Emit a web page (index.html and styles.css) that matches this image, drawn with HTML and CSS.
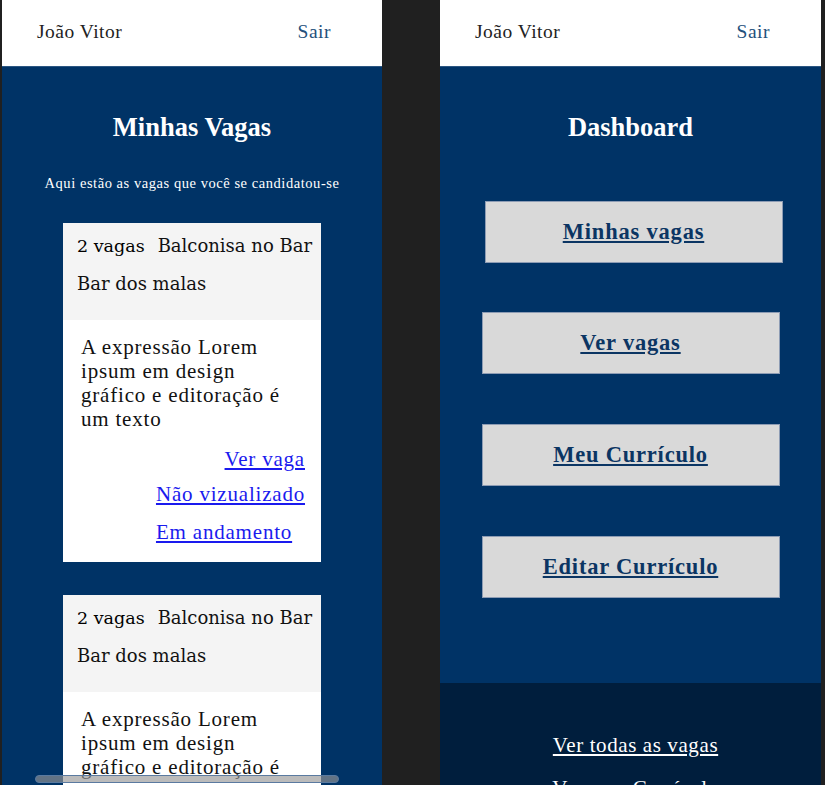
FILE: index.html
```html
<!DOCTYPE html>
<html lang="pt-BR">
<head>
<meta charset="utf-8">
<title>Vagas</title>
<link rel="stylesheet" href="styles.css">
</head>
<body>
<div class="screen">
  <section class="panel panel-left">
    <header class="topbar">
      <span class="user">João Vitor</span>
      <a class="logout" href="#">Sair</a>
    </header>
    <main class="content">
      <h1 class="title">Minhas Vagas</h1>
      <p class="subtitle">Aqui estão as vagas que você se candidatou-se</p>
      <div class="cards">
        <article class="card">
          <div class="card-head">
            <div class="card-row">
              <span class="count">2 vagas</span>
              <span class="role">Balconisa no Bar</span>
            </div>
            <div class="company">Bar dos malas</div>
          </div>
          <div class="card-body">
            <p class="desc">A expressão Lorem ipsum em design gráfico e editoração é um texto</p>
            <div class="actions">
              <a class="view" href="#">Ver vaga</a>
              <div class="status">
                <a href="#">Não vizualizado</a>
                <a href="#">Em andamento</a>
              </div>
            </div>
          </div>
        </article>
        <article class="card">
          <div class="card-head">
            <div class="card-row">
              <span class="count">2 vagas</span>
              <span class="role">Balconisa no Bar</span>
            </div>
            <div class="company">Bar dos malas</div>
          </div>
          <div class="card-body">
            <p class="desc">A expressão Lorem ipsum em design gráfico e editoração é um texto</p>
            <div class="actions">
              <a class="view" href="#">Ver vaga</a>
              <div class="status">
                <a href="#">Não vizualizado</a>
                <a href="#">Em andamento</a>
              </div>
            </div>
          </div>
        </article>
      </div>
    </main>
    <div class="hscroll"></div>
  </section>

  <section class="panel panel-right">
    <header class="topbar">
      <span class="user">João Vitor</span>
      <a class="logout" href="#">Sair</a>
    </header>
    <main class="content dash">
      <h1 class="title">Dashboard</h1>
      <nav class="menu">
        <div class="btn btn-first"><a href="#">Minhas vagas</a></div>
        <div class="btn"><a href="#">Ver vagas</a></div>
        <div class="btn"><a href="#">Meu Currículo</a></div>
        <div class="btn"><a href="#">Editar Currículo</a></div>
      </nav>
    </main>
    <footer class="foot">
      <a href="#">Ver todas as vagas</a>
      <a href="#">Ver meu Currículo</a>
    </footer>
  </section>
</div>
</body>
</html>
```

FILE: styles.css
```css
* { box-sizing: border-box; }

html, body {
  margin: 0;
  padding: 0;
  background: #202020;
  height: 785px;
  overflow: hidden;
}

.screen {
  display: flex;
  height: 785px;
  padding-left: 2px;
  gap: 58px;
  font-family: "Liberation Serif", "Times New Roman", serif;
}

.panel {
  position: relative;
  width: 380px;
  height: 785px;
  overflow: hidden;
  background: #003366;
  display: flex;
  flex-direction: column;
}

.panel-right { width: 381px; }

.topbar {
  height: 67px;
  flex: none;
  background: #ffffff;
  border-bottom: 1px solid #2b5682;
  display: flex;
  justify-content: space-between;
  align-items: center;
  padding: 0 51px 2px 35px;
  font-size: 19.5px;
  letter-spacing: 0.5px;
}

.user { color: #222; }

.logout {
  color: #24507c;
  text-decoration: none;
}

.content {
  display: flex;
  flex-direction: column;
  align-items: center;
}

.title {
  margin: 45px 0 0;
  color: #fff;
  font-size: 26.5px;
  font-weight: bold;
  line-height: 30px;
}

.subtitle {
  margin: 33px 0 0;
  color: #fff;
  font-size: 14.5px;
  letter-spacing: 0.55px;
  line-height: 16px;
}

.cards {
  margin-top: 32px;
  display: flex;
  flex-direction: column;
  gap: 33px;
}

.card {
  width: 258px;
  background: #fff;
  flex: none;
}

.card-head {
  background: #f4f4f4;
  height: 97px;
  padding: 12px 0 0 14px;
  font-family: "DejaVu Serif", serif;
  color: #111;
  white-space: nowrap;
}

.card-row {
  display: flex;
  gap: 13px;
  align-items: baseline;
}

.count { font-size: 17.5px; color: #000; }
.role { font-size: 18px; }

.company {
  margin-top: 17px;
  font-size: 18px;
}

.card-body {
  padding: 15px 16px 18px 18px;
}

.desc {
  margin: 0;
  font-size: 21px;
  letter-spacing: 0.8px;
  line-height: 24px;
  color: #111;
}

.actions {
  margin-top: 16px;
  display: flex;
  flex-direction: column;
  font-size: 21px;
  letter-spacing: 0.8px;
  line-height: 24px;
}

.actions a { color: #1a1aee; }

.view { align-self: flex-end; }

.status {
  align-self: flex-end;
  display: flex;
  flex-direction: column;
  gap: 14px;
  margin-top: 11px;
}

.hscroll {
  position: absolute;
  left: 33px;
  bottom: 2px;
  width: 304px;
  height: 8px;
  border-radius: 5px;
  border: 1px solid #5a7aa0;
  background: rgba(150, 150, 150, 0.65);
}

.dash { flex: 1; }

.menu {
  margin-top: 59px;
  display: flex;
  flex-direction: column;
  align-items: center;
  gap: 50px;
}

.btn {
  width: 298px;
  height: 62px;
  background: #d9d9d9;
  border: 1px solid #8d9cb4;
  display: flex;
  align-items: center;
  justify-content: center;
}

.btn-first { margin-left: 6px; margin-bottom: -1px; }

.btn a {
  color: #0b3563;
  font-size: 22.5px;
  letter-spacing: 0.8px;
  font-weight: bold;
}

.foot {
  flex: none;
  height: 102px;
  background: #001e3d;
  display: flex;
  flex-direction: column;
  align-items: center;
  padding: 50px 0 0 10px;
  gap: 19px;
}

.foot a {
  color: #fff;
  font-size: 21px;
  letter-spacing: 0.6px;
  line-height: 24px;
}
```
